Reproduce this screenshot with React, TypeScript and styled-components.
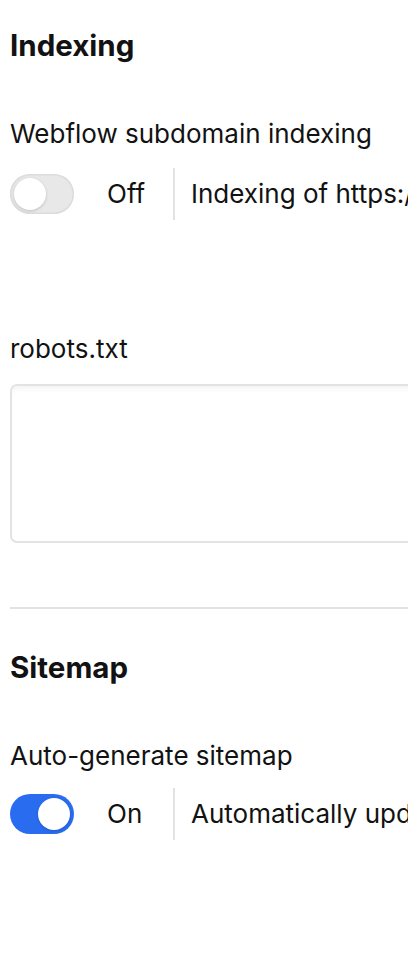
import React from "react";
import styled, { createGlobalStyle } from "styled-components";

const Global = createGlobalStyle`
  html, body { margin: 0; padding: 0; background: #ffffff; overflow: hidden; }
  body { font-family: Inter, "Noto Sans", sans-serif; color: #121212; }
  * { box-sizing: border-box; }
`;

const Page = styled.div`
  width: 760px;
  padding: 26.5px 0 0 10px;
  display: flex;
  flex-direction: column;
`;

const Section = styled.section<{ $top?: number }>`
  display: flex;
  flex-direction: column;
  padding-top: ${(p) => p.$top ?? 0}px;
`;

const Heading = styled.h2`
  margin: 0 0 54px 0;
  font-size: 29.5px;
  line-height: 36px;
  font-weight: 700;
`;

const Label = styled.div<{ $gap: number }>`
  font-size: 26px;
  line-height: 34px;
  font-weight: 400;
  margin-bottom: ${(p) => p.$gap}px;
`;

const ToggleRow = styled.div<{ $after?: number }>`
  display: flex;
  align-items: center;
  height: 52px;
  margin-bottom: ${(p) => p.$after ?? 0}px;
`;

const Track = styled.div<{ $on: boolean }>`
  width: 64px;
  height: 40px;
  border-radius: 20px;
  padding: 4px;
  display: flex;
  justify-content: ${(p) => (p.$on ? "flex-end" : "flex-start")};
  background: ${(p) => (p.$on ? "#2a6cf0" : "#e8e8e8")};
  box-shadow: ${(p) => (p.$on ? "none" : "inset 0 0 0 1.5px #dcdcdc")};
  flex-shrink: 0;
`;

const Knob = styled.div`
  width: 32px;
  height: 32px;
  border-radius: 50%;
  background: #ffffff;
  box-shadow: 0 1px 3px rgba(0, 0, 0, 0.18);
`;

const StateText = styled.span`
  font-size: 26px;
  line-height: 34px;
  width: 99px;
  padding-left: 33px;
  flex-shrink: 0;
`;

const Divider = styled.div`
  width: 2px;
  align-self: stretch;
  background: #e2e2e2;
  margin-right: 16px;
`;

const Description = styled.span`
  font-size: 26px;
  line-height: 34px;
  white-space: nowrap;
`;

const TextArea = styled.textarea`
  display: block;
  width: 700px;
  height: 159px;
  margin: 0 0 64px 0;
  border: 2px solid #e3e3e3;
  border-radius: 7px;
  background: #ffffff;
  box-shadow: inset 0 6px 6px -4px rgba(0, 0, 0, 0.06);
  resize: none;
  outline: none;
  font: inherit;
`;

const Rule = styled.hr`
  margin: 0;
  border: none;
  height: 2px;
  background: #e2e2e2;
  width: 700px;
`;

function Toggle({
  on,
  label,
  desc,
  after,
}: {
  on: boolean;
  label: string;
  desc: string;
  after?: number;
}) {
  return (
    <ToggleRow $after={after}>
      <Track $on={on}>
        <Knob />
      </Track>
      <StateText>{label}</StateText>
      <Divider />
      <Description>{desc}</Description>
    </ToggleRow>
  );
}

export default function App() {
  return (
    <>
      <Global />
      <Page>
        <Section>
          <Heading>Indexing</Heading>
          <Label $gap={17.5}>Webflow subdomain indexing</Label>
          <Toggle
            on={false}
            label="Off"
            desc="Indexing of https://example.webflow.io"
            after={111.5}
          />
          <Label $gap={18.5}>robots.txt</Label>
          <TextArea />
          <Rule />
        </Section>
        <Section $top={39.5}>
          <Heading>Sitemap</Heading>
          <Label $gap={15}>Auto-generate sitemap</Label>
          <Toggle on={true} label="On" desc="Automatically update sitemap" />
        </Section>
      </Page>
    </>
  );
}
